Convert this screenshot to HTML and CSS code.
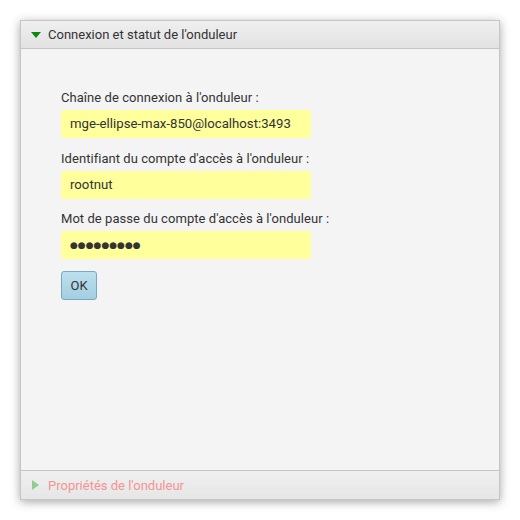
FILE: index.html
```html
<!DOCTYPE html>
<html lang="fr">
<head>
<meta charset="utf-8">
<title>Onduleur</title>
<link rel="stylesheet" href="styles.css">
</head>
<body>
<div class="panel">
  <div class="section-head">
    <span class="tri tri-down"></span>
    <span class="head-title">Connexion et statut de l'onduleur</span>
  </div>
  <div class="section-body">
    <div class="group">
      <div class="label">Chaîne de connexion à l'onduleur :</div>
      <div class="field">mge-ellipse-max-850@localhost:3493</div>
    </div>
    <div class="group">
      <div class="label">Identifiant du compte d'accès à l'onduleur :</div>
      <div class="field">rootnut</div>
    </div>
    <div class="group">
      <div class="label">Mot de passe du compte d'accès à l'onduleur :</div>
      <div class="field field-pass">●●●●●●●●●</div>
    </div>
    <button class="btn">OK</button>
  </div>
  <div class="section-foot">
    <span class="tri tri-right"></span>
    <span class="foot-title">Propriétés de l'onduleur</span>
  </div>
</div>
</body>
</html>
```
FILE: styles.css
```css
html, body {
  margin: 0;
  padding: 0;
  background: #ffffff;
}
body {
  padding: 20px;
  font-family: Roboto, "Liberation Sans", sans-serif;
  color: #333333;
}
.panel {
  width: 478px;
  height: 478px;
  border: 1px solid #c6c6c6;
  background: #f4f4f4;
  box-shadow: 0 2px 9px rgba(0, 0, 0, 0.35);
  display: flex;
  flex-direction: column;
}
.section-head {
  height: 27px;
  border-bottom: 1px solid #c6c6c6;
  background: linear-gradient(#efefef, #e2e2e2);
  display: flex;
  align-items: center;
  padding-left: 10px;
  font-size: 13px;
}
.tri {
  width: 0;
  height: 0;
  margin-right: 7px;
}
.tri-down {
  border-left: 5px solid transparent;
  border-right: 5px solid transparent;
  border-top: 6px solid #0a8a0a;
  margin-top: 1px;
}
.tri-right {
  border-top: 5px solid transparent;
  border-bottom: 5px solid transparent;
  border-left: 7px solid #92cc92;
  margin-left: 1px;
  margin-right: 9px;
}
.head-title {
  color: #333;
}
.section-body {
  flex: 1;
  padding: 40px 0 0 40px;
  display: flex;
  flex-direction: column;
  align-items: flex-start;
}
.group {
  display: flex;
  flex-direction: column;
  margin-bottom: 11.5px;
}
.label {
  font-size: 13px;
  line-height: 16px;
  height: 16px;
  margin-bottom: 4px;
  margin-top: 1px;
  letter-spacing: 0.05px;
}
.field {
  width: 241px;
  height: 28px;
  padding-left: 9px;
  background: #ffff9c;
  border-radius: 3px;
  font-size: 13.2px;
  line-height: 28px;
  color: #333;
}
.field-pass {
  font-family: "DejaVu Sans", sans-serif;
  font-size: 9px;
  letter-spacing: 0px;
  color: #333;
}
.btn {
  width: 36px;
  height: 29px;
  padding: 0;
  border: 1px solid #7aa8c2;
  border-radius: 3px;
  background: linear-gradient(#bde0ee, #a3cee2);
  font-family: Roboto, "Liberation Sans", sans-serif;
  font-size: 13px;
  color: #333;
}
.section-foot {
  height: 28px;
  border-top: 1px solid #c6c6c6;
  background: linear-gradient(#f0f0f0, #e6e6e6);
  display: flex;
  align-items: center;
  padding-left: 10px;
  font-size: 13px;
}
.foot-title {
  color: #f39494;
}
```
